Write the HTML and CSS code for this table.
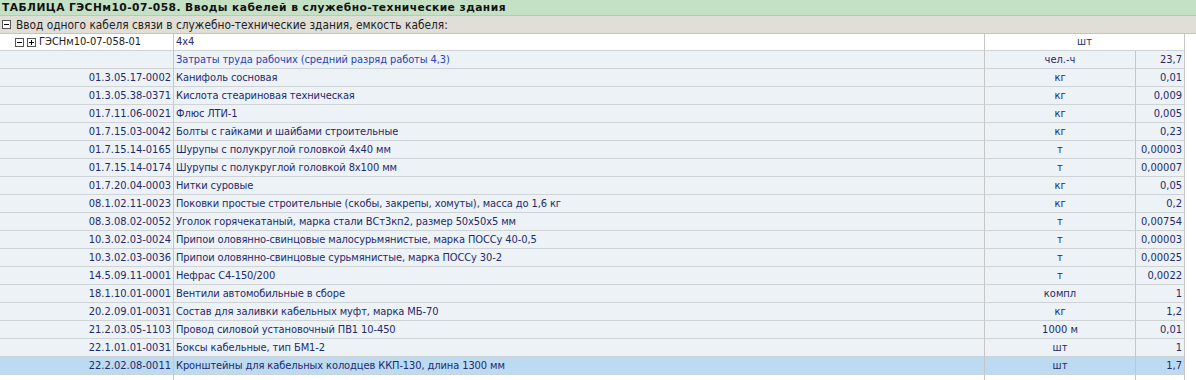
FILE: index.html
```html
<!DOCTYPE html>
<html lang="ru">
<head>
<meta charset="utf-8">
<title>ТАБЛИЦА ГЭСНм10-07-058</title>
<link rel="stylesheet" href="styles.css">
</head>
<body>
<div class="title">ТАБЛИЦА ГЭСНм10-07-058. Вводы кабелей в служебно-технические здания</div>
<div class="group">
  <svg class="box" width="9" height="9" viewBox="0 0 9 9"><rect x="0.5" y="0.5" width="8" height="8" fill="#fff" stroke="#555"/><path d="M2 4.5h5" stroke="#000"/></svg>
  <span>Ввод одного кабеля связи в служебно-технические здания, емкость кабеля:</span>
</div>
<div class="row head">
  <div class="c code">
    <svg class="box" width="9" height="9" viewBox="0 0 9 9"><rect x="0.5" y="0.5" width="8" height="8" fill="#fff" stroke="#555"/><path d="M2 4.5h5" stroke="#000"/></svg>
    <svg class="box" width="9" height="9" viewBox="0 0 9 9"><rect x="0.5" y="0.5" width="8" height="8" fill="#fff" stroke="#555"/><path d="M2 4.5h5M4.5 2v5" stroke="#000"/></svg>
    <span class="hcode">ГЭСНм10-07-058-01</span>
  </div>
  <div class="c name">4x4</div>
  <div class="c unit span2">шт</div>
  <div class="c extra"></div>
</div>
<div class="row data labor">
  <div class="c code"></div>
  <div class="c name">Затраты труда рабочих (средний разряд работы 4,3)</div>
  <div class="c unit">чел.-ч</div>
  <div class="c qty">23,7</div>
  <div class="c extra"></div>
</div>
<div class="row data"><div class="c code">01.3.05.17-0002</div><div class="c name">Канифоль сосновая</div><div class="c unit">кг</div><div class="c qty">0,01</div><div class="c extra"></div></div>
<div class="row data"><div class="c code">01.3.05.38-0371</div><div class="c name">Кислота стеариновая техническая</div><div class="c unit">кг</div><div class="c qty">0,009</div><div class="c extra"></div></div>
<div class="row data"><div class="c code">01.7.11.06-0021</div><div class="c name">Флюс ЛТИ-1</div><div class="c unit">кг</div><div class="c qty">0,005</div><div class="c extra"></div></div>
<div class="row data"><div class="c code">01.7.15.03-0042</div><div class="c name">Болты с гайками и шайбами строительные</div><div class="c unit">кг</div><div class="c qty">0,23</div><div class="c extra"></div></div>
<div class="row data"><div class="c code">01.7.15.14-0165</div><div class="c name">Шурупы с полукруглой головкой 4x40 мм</div><div class="c unit">т</div><div class="c qty">0,00003</div><div class="c extra"></div></div>
<div class="row data"><div class="c code">01.7.15.14-0174</div><div class="c name">Шурупы с полукруглой головкой 8x100 мм</div><div class="c unit">т</div><div class="c qty">0,00007</div><div class="c extra"></div></div>
<div class="row data"><div class="c code">01.7.20.04-0003</div><div class="c name">Нитки суровые</div><div class="c unit">кг</div><div class="c qty">0,05</div><div class="c extra"></div></div>
<div class="row data"><div class="c code">08.1.02.11-0023</div><div class="c name">Поковки простые строительные (скобы, закрепы, хомуты), масса до 1,6 кг</div><div class="c unit">кг</div><div class="c qty">0,2</div><div class="c extra"></div></div>
<div class="row data"><div class="c code">08.3.08.02-0052</div><div class="c name">Уголок горячекатаный, марка стали ВСт3кп2, размер 50x50x5 мм</div><div class="c unit">т</div><div class="c qty">0,00754</div><div class="c extra"></div></div>
<div class="row data"><div class="c code">10.3.02.03-0024</div><div class="c name">Припои оловянно-свинцовые малосурьмянистые, марка ПОССу 40-0,5</div><div class="c unit">т</div><div class="c qty">0,00003</div><div class="c extra"></div></div>
<div class="row data"><div class="c code">10.3.02.03-0036</div><div class="c name">Припои оловянно-свинцовые сурьмянистые, марка ПОССу 30-2</div><div class="c unit">т</div><div class="c qty">0,00025</div><div class="c extra"></div></div>
<div class="row data"><div class="c code">14.5.09.11-0001</div><div class="c name">Нефрас С4-150/200</div><div class="c unit">т</div><div class="c qty">0,0022</div><div class="c extra"></div></div>
<div class="row data"><div class="c code">18.1.10.01-0001</div><div class="c name">Вентили автомобильные в сборе</div><div class="c unit">компл</div><div class="c qty">1</div><div class="c extra"></div></div>
<div class="row data"><div class="c code">20.2.09.01-0031</div><div class="c name">Состав для заливки кабельных муфт, марка МБ-70</div><div class="c unit">кг</div><div class="c qty">1,2</div><div class="c extra"></div></div>
<div class="row data"><div class="c code">21.2.03.05-1103</div><div class="c name">Провод силовой установочный ПВ1 10-450</div><div class="c unit">1000 м</div><div class="c qty">0,01</div><div class="c extra"></div></div>
<div class="row data"><div class="c code">22.1.01.01-0031</div><div class="c name">Боксы кабельные, тип БМ1-2</div><div class="c unit">шт</div><div class="c qty">1</div><div class="c extra"></div></div>
<div class="row data selected"><div class="c code">22.2.02.08-0011</div><div class="c name">Кронштейны для кабельных колодцев ККП-130, длина 1300 мм</div><div class="c unit">шт</div><div class="c qty">1,7</div><div class="c extra"></div></div>
<div class="row empty"><div class="c code"></div><div class="c name"></div><div class="c unit"></div><div class="c qty"></div><div class="c extra"></div></div>
</body>
</html>
```

FILE: styles.css
```css
html, body {
  margin: 0;
  padding: 0;
  background: #ffffff;
  overflow: hidden;
}

body {
  width: 1196px;
  height: 380px;
  font-family: "DejaVu Sans Condensed", "DejaVu Sans", sans-serif;
  font-stretch: condensed;
  font-size: 11px;
  color: #1e2a6c;
}

.title {
  height: 15px;
  line-height: 15px;
  background: #c5e1c5;
  border-bottom: 1px solid #b9c9b9;
  padding-left: 2px;
  font-family: "DejaVu Sans", sans-serif;
  font-stretch: normal;
  font-size: 10.7px;
  font-weight: bold;
  letter-spacing: 0.45px;
  color: #111111;
  white-space: nowrap;
}

.group {
  height: 17px;
  background: #dfdfd8;
  border-bottom: 1px solid #c4c4c0;
  display: flex;
  align-items: center;
  gap: 5px;
  padding-left: 2px;
  font-size: 11.8px;
  color: #222222;
  white-space: nowrap;
}

.box {
  display: block;
  flex: none;
}

.row {
  display: grid;
  grid-template-columns: 174px 811px 151px 49px 1fr;
  height: 18px;
}

.c {
  box-sizing: border-box;
  border-right: 1px solid #c6c6c6;
  border-bottom: 1px solid #cfd3d6;
  padding: 0 2px;
  line-height: 17px;
  white-space: nowrap;
  overflow: hidden;
}

.name {
  letter-spacing: -0.1px;
}

.data .c {
  background: #edf2f6;
}

.data .extra,
.head .extra,
.empty .extra {
  background: #ffffff;
  border: 0;
}

.head {
  height: 17px;
}

.head .c {
  line-height: 16px;
  background: #ffffff;
}

.head .code {
  display: flex;
  align-items: center;
  gap: 3px;
  padding-left: 15px;
  color: #222222;
}

.head .name {
  color: #2a2a6a;
}

.span2 {
  grid-column: 3 / span 2;
}

.code {
  text-align: right;
}

.unit {
  text-align: center;
}

.qty {
  text-align: right;
}

.labor .name {
  color: #2744b3;
}

.selected .c {
  background: #bcdaf2;
}

.selected .extra {
  background: #ffffff;
}

.empty .c {
  background: #ffffff;
  border-bottom: 0;
}
```
